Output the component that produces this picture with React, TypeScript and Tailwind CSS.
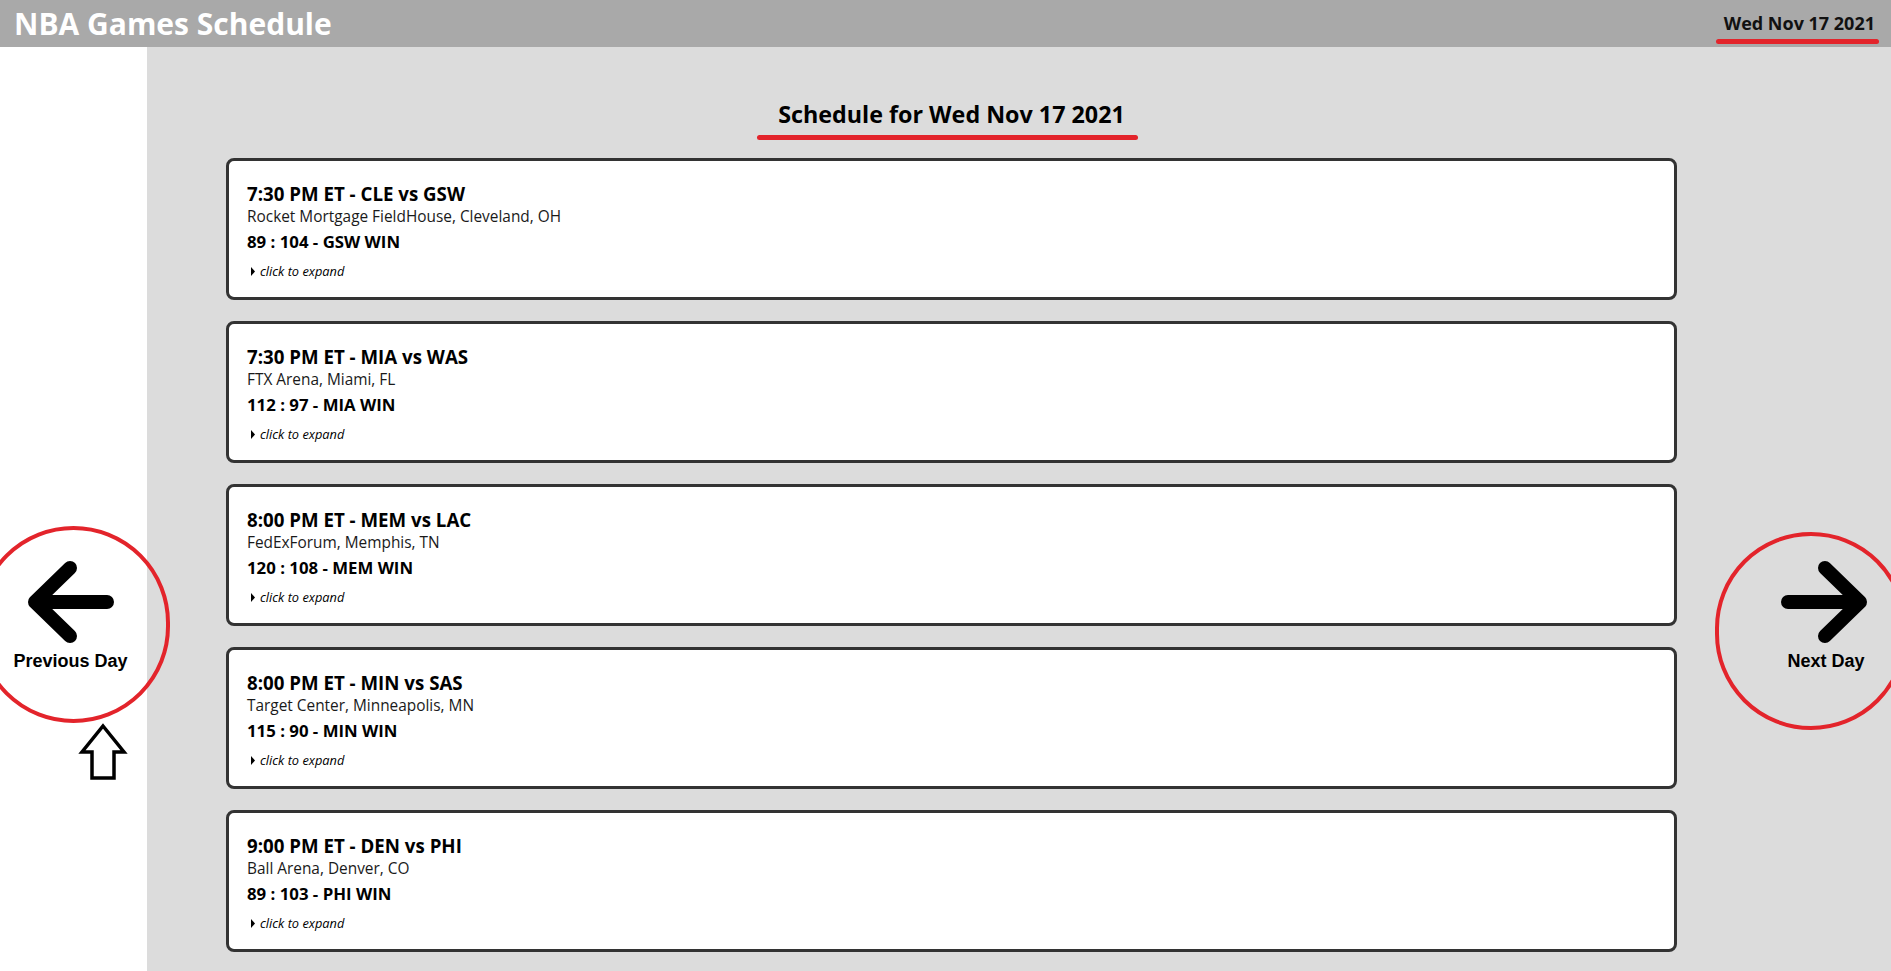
import React from "react";

interface Game {
  time: string;
  home: string;
  away: string;
  venue: string;
  homeScore: number;
  awayScore: number;
}

const games: Game[] = [
  { time: "7:30 PM ET", home: "CLE", away: "GSW", venue: "Rocket Mortgage FieldHouse, Cleveland, OH", homeScore: 89, awayScore: 104 },
  { time: "7:30 PM ET", home: "MIA", away: "WAS", venue: "FTX Arena, Miami, FL", homeScore: 112, awayScore: 97 },
  { time: "8:00 PM ET", home: "MEM", away: "LAC", venue: "FedExForum, Memphis, TN", homeScore: 120, awayScore: 108 },
  { time: "8:00 PM ET", home: "MIN", away: "SAS", venue: "Target Center, Minneapolis, MN", homeScore: 115, awayScore: 90 },
  { time: "9:00 PM ET", home: "DEN", away: "PHI", venue: "Ball Arena, Denver, CO", homeScore: 89, awayScore: 103 },
];

const font = { fontFamily: '"Open Sans", "Noto Sans", sans-serif' };
const arial = { fontFamily: '"Liberation Sans", Arial, sans-serif' };

function BigArrow({ dir }: { dir: "left" | "right" }) {
  const pts =
    dir === "left"
      ? "M44 8 L9 42 L44 76 M9 42 L81 42"
      : "M46 8 L81 42 L46 76 M81 42 L9 42";
  return (
    <svg width="90" height="84" viewBox="0 0 90 84">
      <path d={pts} fill="none" stroke="#000" strokeWidth="14" strokeLinecap="round" strokeLinejoin="round" />
    </svg>
  );
}

function GameCard({ g }: { g: Game }) {
  const winner = g.homeScore > g.awayScore ? g.home : g.away;
  return (
    <div className="bg-white border-[3px] border-[#333] rounded-[8px] px-[18px] pt-[21px] pb-[18px] text-black">
      <div className="text-[18.7px] leading-[24px] font-bold">
        {g.time} - {g.home} vs {g.away}
      </div>
      <div className="text-[15.4px] leading-[20px] text-[#1a1a1a] mt-[1px]">{g.venue}</div>
      <div className="text-[16.8px] leading-[20px] font-bold mt-[5px]">
        {g.homeScore} : {g.awayScore} - {winner} WIN
      </div>
      <div className="flex items-center gap-[5px] mt-[11px] pl-[4px] text-[12.8px] leading-[16px] italic">
        <svg width="4" height="9" viewBox="0 0 4 9">
          <path d="M0 0 L4 4.5 L0 9 Z" fill="#000" />
        </svg>
        <span>click to expand</span>
      </div>
    </div>
  );
}

export default function App() {
  return (
    <div className="w-[1891px] h-[971px] overflow-hidden relative flex flex-col" style={font}>
      {/* Header */}
      <div className="h-[47px] bg-[#a9a9a9] flex items-center justify-between shrink-0">
        <h1 className="pl-[14px] text-[30px] font-bold text-white leading-none">NBA Games Schedule</h1>
        <div className="pr-[16px] relative">
          <span className="text-[18px] font-bold text-[#111]">Wed Nov 17 2021</span>
          <span className="absolute left-[-8px] right-[12px] top-[29px] h-[5px] rounded-full bg-[#e3242b]" />
        </div>
      </div>

      <div className="flex flex-1">
        {/* Previous */}
        <div className="w-[147px] bg-white flex flex-col items-center pt-[513px] relative">
          <div className="-ml-[6px]">
            <BigArrow dir="left" />
          </div>
          <div className="text-[18px] font-bold text-black mt-[4px] -ml-[6px]" style={arial}>
            Previous Day
          </div>
        </div>

        {/* Main */}
        <div className="flex-1 bg-[#dcdcdc] flex">
          <div className="flex-1 pl-[79px] pr-[84px]">
            <div className="flex justify-center mt-[52px]">
              <div className="relative">
                <h2 className="text-[23.3px] leading-[30px] font-bold text-black">Schedule for Wed Nov 17 2021</h2>
                <span className="absolute left-[-21px] right-[-13px] top-[36px] h-[5px] rounded-full bg-[#e3242b]" />
              </div>
            </div>
            <div className="mt-[29px] flex flex-col gap-[21px]">
              {games.map((g, i) => (
                <GameCard key={i} g={g} />
              ))}
            </div>
          </div>

          {/* Next */}
          <div className="w-[130px] flex flex-col items-center pt-[513px]">
            <div className="-ml-[4px]">
              <BigArrow dir="right" />
            </div>
            <div className="text-[18px] font-bold text-black mt-[4px]" style={arial}>
              Next Day
            </div>
          </div>
        </div>
      </div>

      {/* annotations */}
      <div className="absolute left-[-23px] top-[526px] w-[193px] h-[197px] rounded-full border-[4px] border-[#e3242b] pointer-events-none" />
      <div className="absolute left-[1715px] top-[532px] w-[192px] h-[198px] rounded-full border-[4px] border-[#e3242b] pointer-events-none" />
      <svg className="absolute left-[78px] top-[722px]" width="52" height="60" viewBox="0 0 52 60">
        <path d="M25 4 L46 30 L36 30 L36 56 L14 56 L14 30 L4 30 Z" fill="#fff" stroke="#000" strokeWidth="3.5" strokeLinejoin="miter" />
      </svg>
    </div>
  );
}
